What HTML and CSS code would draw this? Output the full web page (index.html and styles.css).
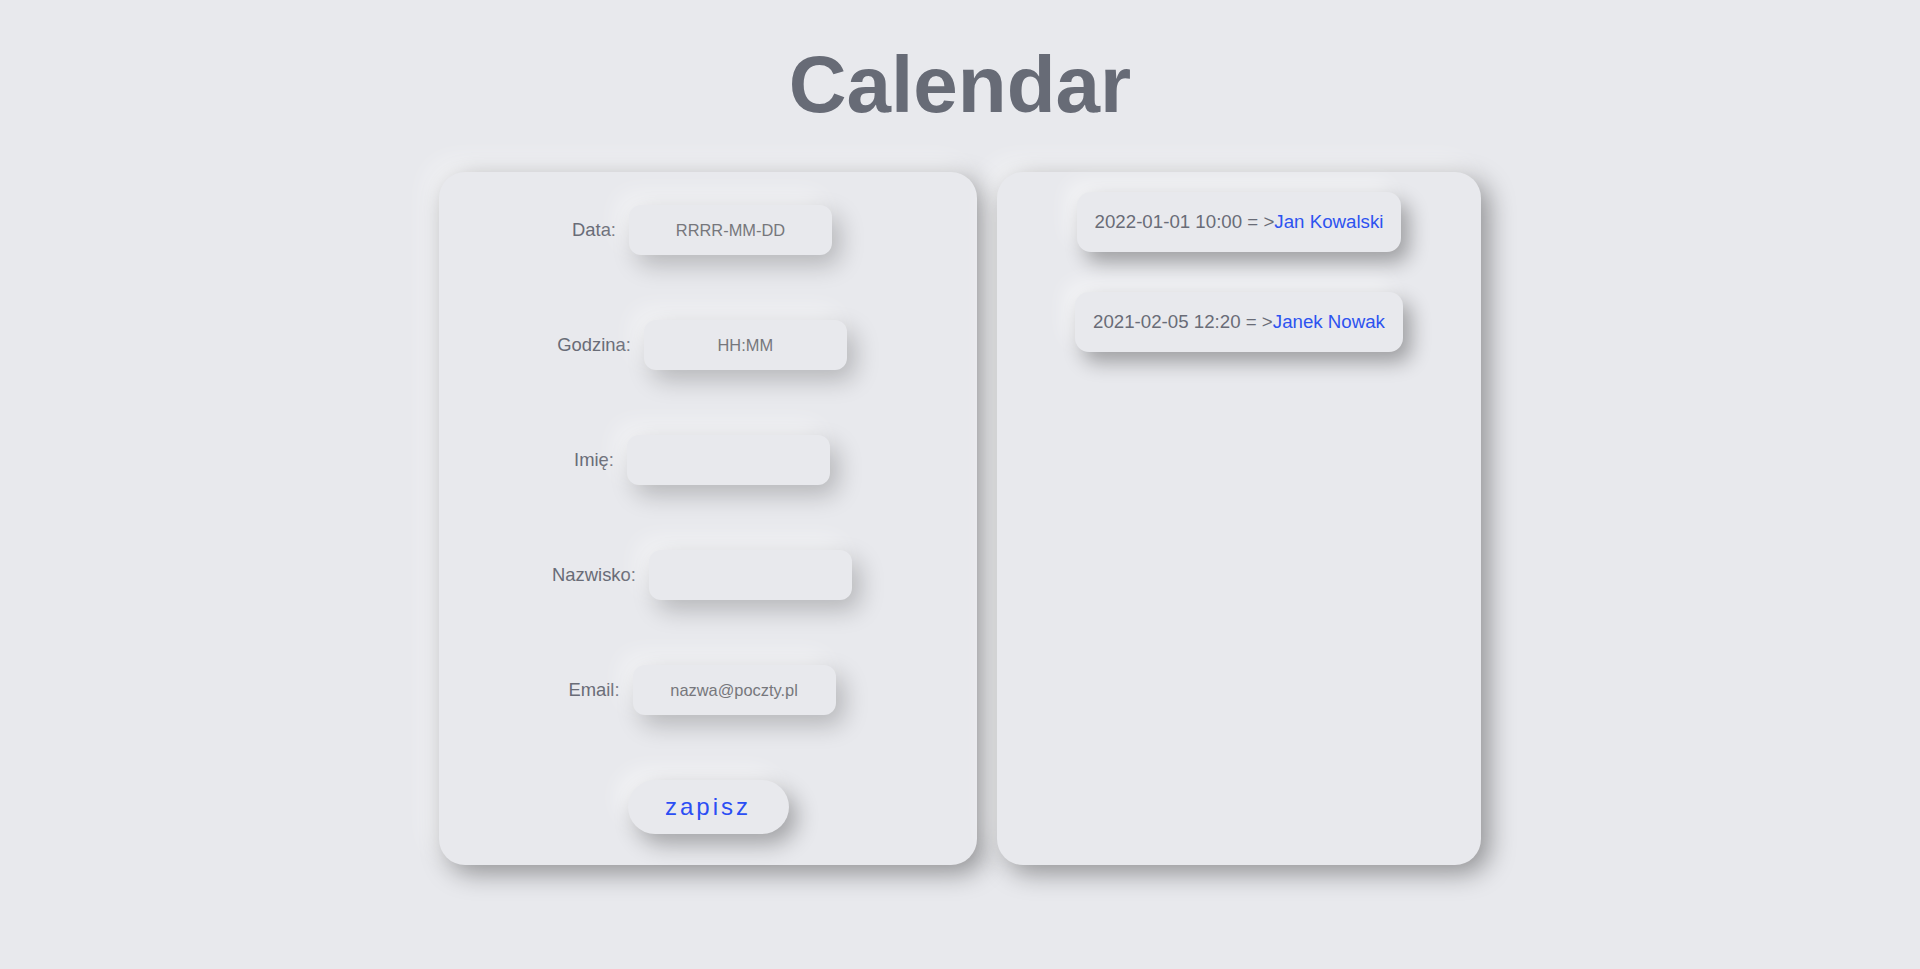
FILE: index.html
```html
<!DOCTYPE html>
<html lang="pl">
<head>
<meta charset="utf-8">
<title>Calendar</title>
<link rel="stylesheet" href="styles.css">
</head>
<body>
<h1 class="title">Calendar</h1>
<main class="panels">
  <section class="panel panel-form">
    <form class="form">
      <div class="row"><label class="label" for="data">Data:</label><input class="field" id="data" type="text" placeholder="RRRR-MM-DD"></div>
      <div class="row"><label class="label" for="godzina">Godzina:</label><input class="field" id="godzina" type="text" placeholder="HH:MM"></div>
      <div class="row"><label class="label" for="imie">Imię:</label><input class="field" id="imie" type="text"></div>
      <div class="row"><label class="label" for="nazwisko">Nazwisko:</label><input class="field" id="nazwisko" type="text"></div>
      <div class="row"><label class="label" for="email">Email:</label><input class="field" id="email" type="text" placeholder="nazwa@poczty.pl"></div>
      <div class="row row-btn"><button class="save" type="button">zapisz</button></div>
    </form>
  </section>
  <section class="panel panel-list">
    <div class="record">2022-01-01 10:00 = &gt;<span class="name">Jan Kowalski</span></div>
    <div class="record">2021-02-05 12:20 = &gt;<span class="name">Janek Nowak</span></div>
  </section>
</main>
</body>
</html>
```
FILE: styles.css
```css
html, body {
  margin: 0;
  padding: 0;
  background: #e8e9ed;
  font-family: "Liberation Sans", Arial, sans-serif;
  color: #696c77;
}

body {
  min-height: 100vh;
  padding-bottom: 1px;
  box-sizing: border-box;
}

.title {
  margin: 0;
  padding-top: 40px;
  line-height: 89px;
  font-size: 80px;
  font-weight: bold;
  text-align: center;
  color: #676b76;
}

.panels {
  display: flex;
  justify-content: center;
  gap: 20px;
  margin-top: 43px;
  padding-bottom: 80px;
}

.panel {
  box-sizing: border-box;
  height: 693px;
  background: #e8e9ed;
  border-radius: 26px;
  box-shadow: 8px 8px 26px rgba(0, 0, 0, 0.38), -10px -10px 26px rgba(255, 255, 255, 0.55);
}

.panel-form {
  width: 538px;
  padding-top: 33px;
}

.panel-list {
  width: 484px;
  padding-top: 20px;
  display: flex;
  flex-direction: column;
  align-items: center;
  gap: 40px;
}

.form {
  display: flex;
  flex-direction: column;
  gap: 65px;
  margin: 0;
}

.row {
  display: flex;
  justify-content: center;
  align-items: center;
  gap: 13px;
  height: 50px;
  padding-right: 12px;
}

.row-btn {
  padding-right: 0;
  height: 54px;
}

.label {
  font-size: 18.4px;
  color: #696c77;
}

.field {
  box-sizing: border-box;
  width: 203px;
  height: 50px;
  border: none;
  outline: none;
  border-radius: 12px;
  background: #e8e9ed;
  font-family: "Liberation Sans", Arial, sans-serif;
  font-size: 16.4px;
  text-align: center;
  color: #555;
  box-shadow: 8px 10px 24px rgba(0, 0, 0, 0.22), -10px -10px 24px rgba(255, 255, 255, 0.5);
}

.field::placeholder {
  color: #76777c;
}

.save {
  width: 161px;
  height: 54px;
  border: none;
  border-radius: 27px;
  background: #e8e9ed;
  font-family: "Liberation Sans", Arial, sans-serif;
  font-size: 24px;
  letter-spacing: 3px;
  color: #2b4ef4;
  cursor: pointer;
  box-shadow: 8px 10px 22px rgba(0, 0, 0, 0.3), -10px -10px 22px rgba(255, 255, 255, 0.5);
}

.record {
  box-sizing: border-box;
  height: 60px;
  padding: 0 18px;
  display: flex;
  align-items: center;
  border-radius: 14px;
  background: #e8e9ed;
  font-size: 18.7px;
  color: #696c77;
  white-space: nowrap;
  box-shadow: 8px 10px 20px rgba(0, 0, 0, 0.32), -10px -10px 20px rgba(255, 255, 255, 0.5);
}

.name {
  color: #2d53f0;
}
```
